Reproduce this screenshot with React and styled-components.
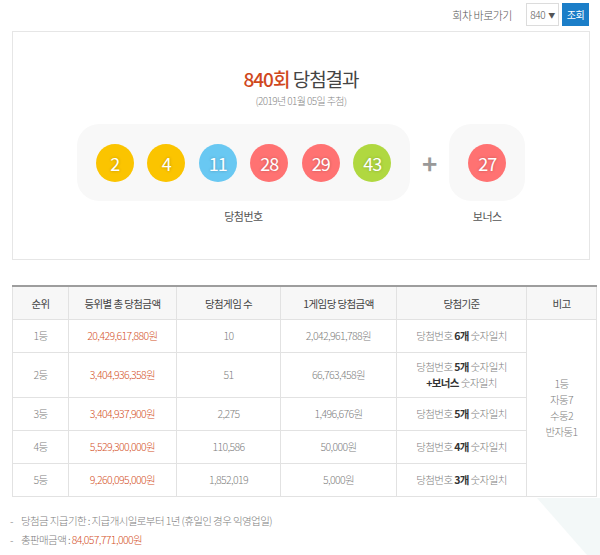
import React from "react";
import styled, { createGlobalStyle } from "styled-components";

const GlobalStyle = createGlobalStyle`
  html, body {
    margin: 0;
    padding: 0;
    background: #ffffff;
    font-family: "Noto Sans CJK KR", "Noto Sans", sans-serif;
    color: #333;
  }
`;

// page wrapper, holds the pale background shape
const Page = styled.div`
  position: relative;
  width: 600px;
  height: 555px;
  overflow: hidden;
`;

const Backdrop = styled.svg`
  position: absolute;
  left: 0;
  top: 0;
  z-index: 0;
`;

const Content = styled.div`
  position: relative;
  z-index: 1;
  padding: 3px 10px 0 12px;
`;

// top "go to round" bar
const TopBar = styled.div`
  display: flex;
  justify-content: flex-end;
  align-items: center;
  height: 23px;
  padding-right: 1px;
`;

const TopLabel = styled.span`
  font-size: 11px;
  font-weight: 300;
  color: #555;
  letter-spacing: -0.5px;
  margin-right: 14px;
`;

const RoundSelect = styled.div`
  box-sizing: border-box;
  width: 33px;
  height: 23px;
  border: 1px solid #dcdcdc;
  font-size: 10px;
  font-weight: 300;
  color: #555;
  display: flex;
  align-items: center;
  justify-content: center;
  gap: 3px;
  letter-spacing: -0.4px;
  span {
    font-size: 7px;
  }
`;

const SearchButton = styled.button`
  box-sizing: border-box;
  width: 27px;
  height: 23px;
  margin-left: 3px;
  border: 0;
  padding: 0;
  background: #1b7ec8;
  color: #fff;
  font-family: inherit;
  font-size: 10px;
  letter-spacing: -0.5px;
`;

// result panel
const Panel = styled.div`
  box-sizing: border-box;
  margin-top: 5px;
  height: 229px;
  border: 1px solid #e6e6e6;
  background: #fff;
  padding-top: 35px;
  text-align: center;
`;

const Title = styled.h2`
  margin: 0;
  font-size: 19px;
  font-weight: 400;
  line-height: 24px;
  letter-spacing: -1px;
  color: #444;
  strong {
    font-weight: 500;
    color: #d0481d;
  }
`;

const DrawDate = styled.p`
  margin: 2px 0 0;
  font-size: 10px;
  font-weight: 300;
  line-height: 16px;
  letter-spacing: -0.6px;
  color: #888;
`;

const BallArea = styled.div`
  display: flex;
  justify-content: center;
  align-items: flex-start;
  margin-top: 15px;
`;

const Group = styled.div`
  display: flex;
  flex-direction: column;
  align-items: center;
`;

const BallBox = styled.div`
  box-sizing: border-box;
  height: 77px;
  padding: 0 19px;
  border-radius: 22px;
  background: #f8f8f8;
  display: flex;
  align-items: center;
  gap: 13.5px;
`;

const Ball = styled.span`
  width: 38px;
  height: 38px;
  border-radius: 50%;
  background: ${(p) => p.$color};
  color: #fff;
  font-size: 18px;
  font-weight: 400;
  letter-spacing: -1px;
  display: flex;
  align-items: center;
  justify-content: center;
  text-shadow: 0 0 3px rgba(0, 0, 0, 0.25);
`;

const Plus = styled.span`
  width: 39px;
  height: 77px;
  display: flex;
  align-items: center;
  justify-content: center;
  font-size: 26px;
  font-weight: 700;
  color: #999;
`;

const GroupLabel = styled.span`
  margin-top: 7px;
  font-size: 11px;
  line-height: 16px;
  letter-spacing: -0.5px;
  color: #555;
`;

// prize table
const Table = styled.table`
  margin-top: 25px;
  width: 578px;
  border-collapse: collapse;
  table-layout: fixed;
  border-top: 2px solid #9d9d9d;
  background: #fff;
  font-size: 10.5px;
  letter-spacing: -0.6px;
`;

const Th = styled.th`
  height: 32px;
  padding: 0;
  background: #f7f7f7;
  border: 1px solid #e2e2e2;
  border-top: 0;
  font-weight: 400;
  color: #444;
  width: ${(p) => p.$w}px;
`;

const Td = styled.td`
  height: ${(p) => (p.$tall ? 44 : 32)}px;
  padding: 0;
  border: 1px solid #e2e2e2;
  text-align: center;
  vertical-align: middle;
  line-height: 16px;
  font-weight: 300;
  color: ${(p) => (p.$red ? "#d4532a" : "#808080")};
  b {
    font-weight: 700;
    color: #333;
  }
`;

const Notes = styled.ul`
  list-style: none;
  margin: 14px 0 0 -2px;
  padding: 0;
  font-size: 10.5px;
  font-weight: 300;
  letter-spacing: -0.6px;
  color: #808080;
`;

const Note = styled.li`
  line-height: 19px;
  &::before {
    content: "-";
    margin-right: 8px;
  }
  em {
    font-style: normal;
    color: #d4532a;
  }
`;

const YELLOW = "#fbc400";
const BLUE = "#69c8f2";
const RED = "#ff7272";
const GREEN = "#b0d840";

const numbers = [
  { n: 2, c: YELLOW },
  { n: 4, c: YELLOW },
  { n: 11, c: BLUE },
  { n: 28, c: RED },
  { n: 29, c: RED },
  { n: 43, c: GREEN },
];

const rows = [
  { rank: "1등", total: "20,429,617,880원", count: "10", each: "2,042,961,788원", rule: <>당첨번호 <b>6개</b> 숫자일치</> },
  {
    rank: "2등",
    total: "3,404,936,358원",
    count: "51",
    each: "66,763,458원",
    rule: (
      <>
        당첨번호 <b>5개</b> 숫자일치
        <br />
        <b>+보너스</b> 숫자일치
      </>
    ),
    tall: true,
  },
  { rank: "3등", total: "3,404,937,900원", count: "2,275", each: "1,496,676원", rule: <>당첨번호 <b>5개</b> 숫자일치</> },
  { rank: "4등", total: "5,529,300,000원", count: "110,586", each: "50,000원", rule: <>당첨번호 <b>4개</b> 숫자일치</> },
  { rank: "5등", total: "9,260,095,000원", count: "1,852,019", each: "5,000원", rule: <>당첨번호 <b>3개</b> 숫자일치</> },
];

const App = () => {
  return (
    <Page>
      <GlobalStyle />
      <Backdrop width="600" height="555" viewBox="0 0 600 555">
        <polygon points="537,498 600,498 600,555 587,555" fill="#f3f8f8" />
      </Backdrop>
      <Content>
        <TopBar>
          <TopLabel>회차 바로가기</TopLabel>
          <RoundSelect>
            840 <span>▼</span>
          </RoundSelect>
          <SearchButton>조회</SearchButton>
        </TopBar>

        <Panel>
          <Title>
            <strong>840회</strong> 당첨결과
          </Title>
          <DrawDate>(2019년 01월 05일 추첨)</DrawDate>
          <BallArea>
            <Group>
              <BallBox>
                {numbers.map((b) => (
                  <Ball key={b.n} $color={b.c}>
                    {b.n}
                  </Ball>
                ))}
              </BallBox>
              <GroupLabel>당첨번호</GroupLabel>
            </Group>
            <Plus>+</Plus>
            <Group>
              <BallBox>
                <Ball $color={RED}>27</Ball>
              </BallBox>
              <GroupLabel>보너스</GroupLabel>
            </Group>
          </BallArea>
        </Panel>

        <Table>
          <thead>
            <tr>
              <Th $w={55}>순위</Th>
              <Th $w={107}>등위별 총 당첨금액</Th>
              <Th $w={103}>당첨게임 수</Th>
              <Th $w={115}>1게임당 당첨금액</Th>
              <Th $w={129}>당첨기준</Th>
              <Th $w={69}>비고</Th>
            </tr>
          </thead>
          <tbody>
            {rows.map((r, i) => (
              <tr key={r.rank}>
                <Td $tall={r.tall}>{r.rank}</Td>
                <Td $red>{r.total}</Td>
                <Td>{r.count}</Td>
                <Td>{r.each}</Td>
                <Td>{r.rule}</Td>
                {i === 0 && (
                  <Td rowSpan={5}>
                    1등
                    <br />
                    자동7
                    <br />
                    수동2
                    <br />
                    반자동1
                  </Td>
                )}
              </tr>
            ))}
          </tbody>
        </Table>

        <Notes>
          <Note>당첨금 지급기한 : 지급개시일로부터 1년 (휴일인 경우 익영업일)</Note>
          <Note>
            총판매금액 : <em>84,057,771,000원</em>
          </Note>
        </Notes>
      </Content>
    </Page>
  );
};

export default App;
